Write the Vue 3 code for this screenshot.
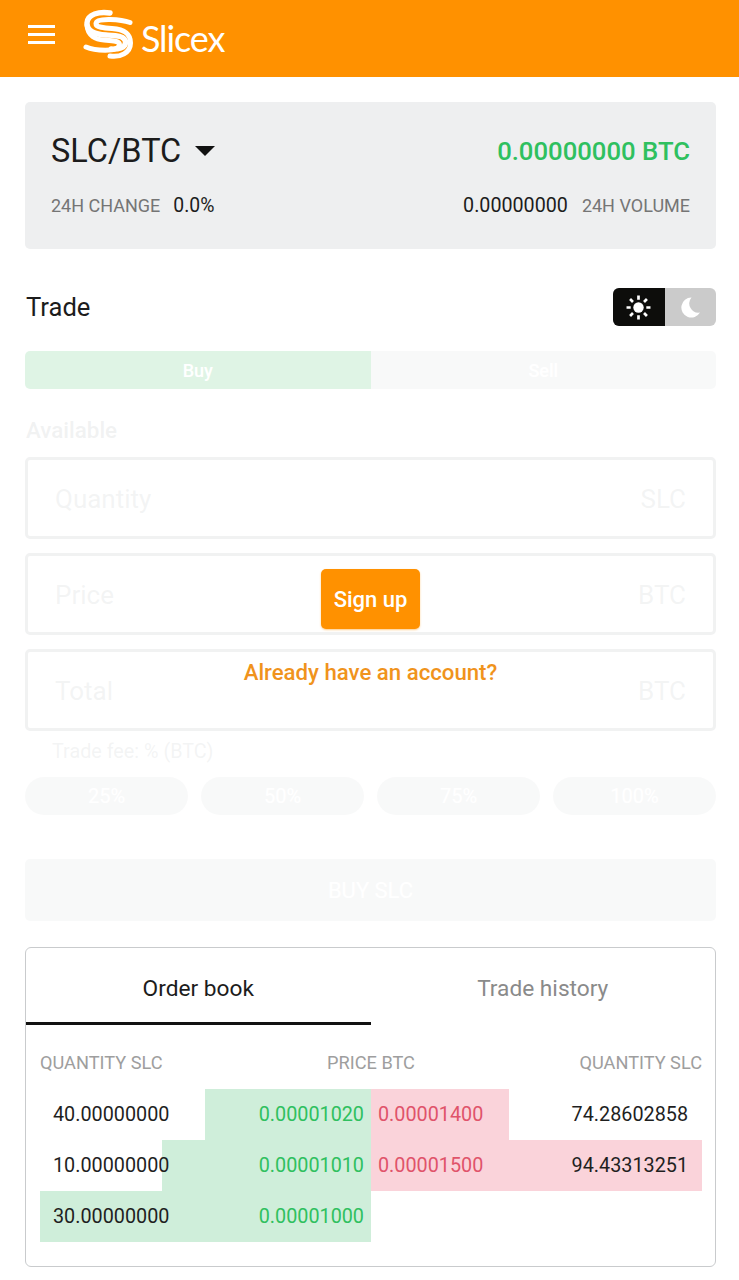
<template>
  <div class="page">
    <header class="topbar">
      <button class="menu-btn" aria-label="Menu">
        <span></span><span></span><span></span>
      </button>
      <div class="logo">
        <svg class="logo__mark" viewBox="0 0 48 48" fill="none" stroke="#fff" stroke-linecap="round">
          <path d="M26 3C15 1.5 3.5 4 3 13C2.8 21 11 24.5 22 25C31 25.5 41.5 25.5 41.5 32.5C41.5 38 34 39.5 27 39" stroke-width="5.4"/>
          <path d="M46 12.5C38 9.5 12.5 7 12 13.5C11.8 17.5 20 18 28 18.5C38 19.2 46.5 22 46.5 33C46.5 43 36 47.5 26 46" stroke-width="5"/>
          <path d="M2 37C10 40.5 34 42.5 35.5 35C36 30.5 27 30.5 20 30C12 29.5 3.5 26 3 15" stroke-width="5"/>
        </svg>
        <span class="logo__text">Slicex</span>
      </div>
    </header>

    <main class="content">
      <section class="ticker">
        <div class="ticker__row">
          <div class="pair">SLC/BTC<i class="caret"></i></div>
          <div class="last-price">0.00000000 BTC</div>
        </div>
        <div class="ticker__row ticker__row--stats">
          <div><span class="stat-label">24H CHANGE</span><span class="stat-value">0.0%</span></div>
          <div><span class="stat-value stat-value--vol">0.00000000</span><span class="stat-label">24H VOLUME</span></div>
        </div>
      </section>

      <div class="trade-head">
        <h2>Trade</h2>
        <div class="theme-toggle">
          <span class="theme-toggle__item theme-toggle__item--on">
            <svg viewBox="0 0 24 24" width="25" height="25" fill="#fff">
              <circle cx="12" cy="12" r="5"/>
              <g stroke="#fff" stroke-width="2.6">
                <path d="M12 0.5v4M12 19.5v4M0.5 12h4M19.5 12h4M3.9 3.9l2.8 2.8M17.3 17.3l2.8 2.8M3.9 20.1l2.8-2.8M17.3 6.7l2.8-2.8"/>
              </g>
            </svg>
          </span>
          <span class="theme-toggle__item">
            <svg viewBox="0 0 24 24" width="24" height="24" fill="#fff">
              <path d="M13.5 2.5A10 10 0 1 0 22 17.5A9.2 9.2 0 0 1 13.5 2.5Z"/>
            </svg>
          </span>
        </div>
      </div>

      <section class="trade-form">
        <div class="side-tabs">
          <div class="side-tabs__item side-tabs__item--buy">Buy</div>
          <div class="side-tabs__item side-tabs__item--sell">Sell</div>
        </div>
        <div class="available">Available</div>
        <div class="fields">
          <div v-for="f in fields" :key="f.label" class="field">
            <span>{{ f.label }}</span><span>{{ f.unit }}</span>
          </div>
        </div>
        <div class="fee">Trade fee: % (BTC)</div>
        <div class="pills">
          <div v-for="p in percents" :key="p" class="pill">{{ p }}</div>
        </div>
        <div class="submit">BUY SLC</div>

        <div class="guest-overlay">
          <button class="signup">Sign up</button>
          <a class="login-link">Already have an account?</a>
        </div>
      </section>

      <section class="book">
        <div class="book__tabs">
          <div class="book__tab book__tab--active">Order book</div>
          <div class="book__tab">Trade history</div>
        </div>
        <div class="book__body">
          <div class="book__head">
            <span>QUANTITY SLC</span>
            <span>PRICE BTC</span>
            <span>QUANTITY SLC</span>
          </div>
          <div class="book__sides">
            <div class="book__side">
              <div v-for="b in bids" :key="b.price" class="order order--bid">
                <div class="order__bar order__bar--bid" :style="{ width: b.depth + '%' }"></div>
                <span class="order__qty">{{ b.qty }}</span>
                <span class="order__price order__price--bid">{{ b.price }}</span>
              </div>
            </div>
            <div class="book__side">
              <div v-for="a in asks" :key="a.price" class="order order--ask">
                <div class="order__bar order__bar--ask" :style="{ width: a.depth + '%' }"></div>
                <span class="order__price order__price--ask">{{ a.price }}</span>
                <span class="order__qty">{{ a.qty }}</span>
              </div>
            </div>
          </div>
        </div>
      </section>
    </main>
  </div>
</template>

<script setup>
const fields = [
  { label: 'Quantity', unit: 'SLC' },
  { label: 'Price', unit: 'BTC' },
  { label: 'Total', unit: 'BTC' }
]

const percents = ['25%', '50%', '75%', '100%']

const bids = [
  { qty: '40.00000000', price: '0.00001020', depth: 50.2 },
  { qty: '10.00000000', price: '0.00001010', depth: 63 },
  { qty: '30.00000000', price: '0.00001000', depth: 100 }
]

const asks = [
  { qty: '74.28602858', price: '0.00001400', depth: 41.8 },
  { qty: '94.43313251', price: '0.00001500', depth: 100 }
]
</script>

<style>
html, body {
  margin: 0;
  background: #fff;
}
</style>

<style scoped>
.page {
  width: 739px;
  height: 1280px;
  overflow: hidden;
  background: #fff;
  font-family: Roboto, 'Liberation Sans', sans-serif;
  color: #1a1a1a;
}

.topbar {
  height: 77px;
  box-sizing: border-box;
  background: #ff9100;
  display: flex;
  align-items: flex-start;
  padding: 10px 0 0 28px;
}

.menu-btn {
  width: 27px;
  margin-top: 15px;
  padding: 0;
  border: none;
  background: none;
  display: flex;
  flex-direction: column;
  gap: 5px;
}

.menu-btn span {
  display: block;
  height: 3px;
  background: #fff;
}

.logo {
  display: flex;
  align-items: flex-start;
  margin-left: 29px;
}

.logo__mark {
  width: 48px;
  height: 48px;
  overflow: visible;
}

.logo__text {
  margin: 6px 0 0 9px;
  font-family: Lato, sans-serif;
  font-weight: 400;
  font-size: 36px;
  line-height: 44px;
  letter-spacing: -1.1px;
  color: #fff;
}

.content {
  padding: 25px 23px 0 25px;
}

.ticker {
  height: 147px;
  box-sizing: border-box;
  padding: 26px 26px 0;
  background: #eeeff0;
  border-radius: 5px;
}

.ticker__row {
  display: flex;
  justify-content: space-between;
  align-items: center;
}

.ticker__row--stats {
  margin-top: 20px;
}

.pair {
  display: flex;
  align-items: center;
  font-size: 32.5px;
  line-height: 46px;
  color: #1c1c1c;
}

.caret {
  width: 0;
  height: 0;
  margin-left: 14px;
  border-left: 10px solid transparent;
  border-right: 10px solid transparent;
  border-top: 10px solid #111;
}

.last-price {
  font-size: 25.7px;
  font-weight: 500;
  color: #2fc05f;
}

.stat-label {
  font-size: 18px;
  color: #757575;
}

.stat-value {
  margin-left: 13px;
  font-size: 19.4px;
  color: #1c1c1c;
}

.stat-value--vol {
  margin: 0 14px 0 0;
  font-size: 19.7px;
}

.trade-head {
  display: flex;
  justify-content: space-between;
  align-items: center;
  margin-top: 39px;
  height: 38px;
}

.trade-head h2 {
  margin: 0 0 0 1px;
  font-size: 25.6px;
  font-weight: 400;
  color: #1c1c1c;
}

.theme-toggle {
  display: flex;
  width: 103px;
  height: 38px;
  border-radius: 6px;
  overflow: hidden;
  background: #cbcbcb;
}

.theme-toggle__item {
  flex: 1;
  display: flex;
  align-items: center;
  justify-content: center;
}

.theme-toggle__item--on {
  background: #0d0d0b;
}

.trade-form {
  position: relative;
  margin-top: 25px;
}

.side-tabs {
  display: flex;
  height: 38px;
  border-radius: 5px;
  overflow: hidden;
}

.side-tabs__item {
  flex: 1;
  display: flex;
  align-items: center;
  justify-content: center;
  font-size: 18px;
  font-weight: 500;
  color: #fff;
}

.side-tabs__item--buy {
  background: #22b04c;
}

.side-tabs__item--sell {
  background: #cfd2d4;
}

.available {
  margin: 28px 0 0 1px;
  font-size: 22.4px;
  font-weight: 500;
  line-height: 26px;
  color: #9aa0a4;
}

.fields {
  display: flex;
  flex-direction: column;
  gap: 14px;
  margin-top: 14px;
}

.field {
  height: 82px;
  box-sizing: border-box;
  border: 3px solid #9aa1a6;
  border-radius: 5px;
  padding: 2px 27px 0 27px;
  display: flex;
  justify-content: space-between;
  align-items: center;
  font-size: 26px;
  color: #aaafb3;
}

.fee {
  margin: 10px 0 0 27px;
  font-size: 19.8px;
  line-height: 22px;
  color: #aaafb3;
}

.pills {
  display: grid;
  grid-template-columns: repeat(4, 1fr);
  gap: 13px;
  margin-top: 14px;
}

.pill {
  height: 38px;
  border-radius: 19px;
  background: #cfd2d4;
  display: flex;
  align-items: center;
  justify-content: center;
  font-size: 20px;
  color: #fff;
}

.submit {
  margin-top: 44px;
  height: 62px;
  border-radius: 5px;
  background: #cfd2d4;
  display: flex;
  align-items: center;
  justify-content: center;
  font-size: 22px;
  color: #fff;
}

/* not signed in: form is washed out, call to action sits on top */
.guest-overlay {
  position: absolute;
  inset: -6px 0 -6px;
  background: rgba(255, 255, 255, 0.86);
  display: flex;
  flex-direction: column;
  align-items: center;
  padding-top: 224px;
  box-sizing: border-box;
}

.signup {
  width: 99px;
  height: 60px;
  border: none;
  border-radius: 5px;
  background: #ff9100;
  box-shadow: 0 1px 2px rgba(255, 170, 60, 0.6);
  color: #fff;
  font-family: inherit;
  font-size: 22px;
  font-weight: 500;
}

.login-link {
  margin-top: 29px;
  font-size: 22.2px;
  font-weight: 500;
  line-height: 28px;
  color: #f0931c;
}

.book {
  margin-top: 26px;
  height: 320px;
  box-sizing: border-box;
  border: 1.5px solid #c9cbcd;
  border-radius: 6px;
}

.book__tabs {
  display: flex;
  height: 77px;
}

.book__tab {
  flex: 1;
  display: flex;
  align-items: center;
  justify-content: center;
  padding-top: 7px;
  border-bottom: 3px solid transparent;
  box-sizing: border-box;
  font-size: 22.7px;
  color: #8a8a8a;
}

.book__tab--active {
  color: #1c1c1c;
  border-bottom-color: #111;
}

.book__body {
  padding: 0 13px 0 14px;
}

.book__head {
  display: flex;
  justify-content: space-between;
  height: 64px;
  padding-top: 27px;
  box-sizing: border-box;
  font-size: 18.2px;
  line-height: 22px;
  color: #9e9e9e;
}

.book__sides {
  display: flex;
}

.book__side {
  flex: 1;
}

.order {
  position: relative;
  height: 51px;
  display: flex;
  justify-content: space-between;
  align-items: center;
  padding: 0 13px;
  font-size: 19.8px;
}

.order--bid {
  padding-right: 7px;
}

.order--ask {
  padding-left: 7px;
  padding-right: 14px;
}

.order__bar {
  position: absolute;
  top: 0;
  bottom: 0;
}

.order__bar--bid {
  right: 0;
  background: #cfeeda;
}

.order__bar--ask {
  left: 0;
  background: #fad3da;
}

.order__qty,
.order__price {
  position: relative;
}

.order__qty {
  color: #1f1f1f;
}

.order__price--bid {
  color: #2fc05f;
}

.order__price--ask {
  color: #e0536a;
}
</style>
